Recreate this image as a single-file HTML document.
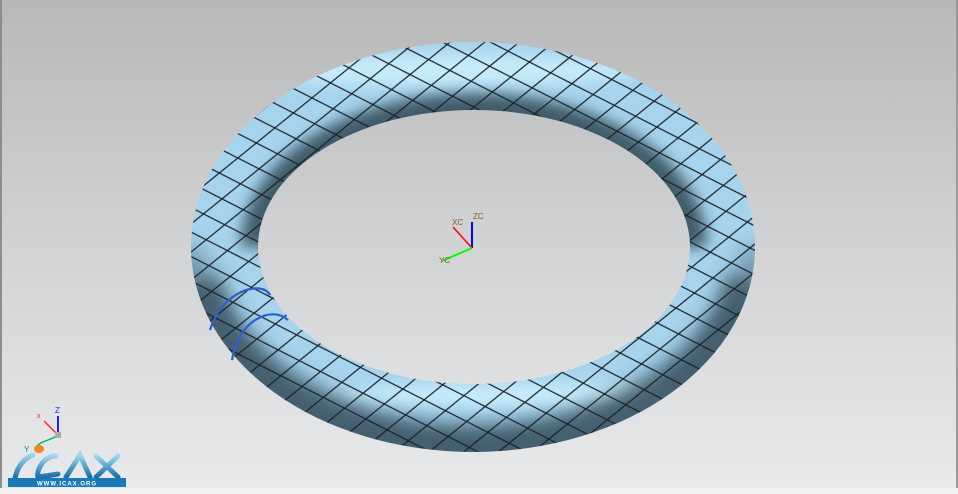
<!DOCTYPE html>
<html><head><meta charset="utf-8"><style>
html,body{margin:0;padding:0;width:958px;height:494px;overflow:hidden}
</style></head><body>
<svg width="958" height="494" viewBox="0 0 958 494" xmlns="http://www.w3.org/2000/svg" font-family="Liberation Sans, sans-serif">
<defs>
<linearGradient id="bg" x1="0" y1="0" x2="0" y2="1">
<stop offset="0" stop-color="#b8b8b9"/><stop offset="0.5" stop-color="#d2d3d4"/><stop offset="1" stop-color="#e9eaeb"/>
</linearGradient>
<pattern id="dia" width="40" height="26" patternUnits="userSpaceOnUse" patternTransform="rotate(-6)">
<path d="M-20 26L20 0 60 26M-20 0L20 26 60 0M-20 52L20 26M20 -26L60 0" stroke="#1a2128" stroke-width="1.2" fill="none"/>
</pattern>
<filter id="bl" x="-20%" y="-50%" width="140%" height="200%"><feGaussianBlur stdDeviation="10"/></filter>
<filter id="bl2" x="-20%" y="-50%" width="140%" height="200%"><feGaussianBlur stdDeviation="7"/></filter>
<mask id="ring">
<ellipse cx="473" cy="247" rx="282" ry="205" fill="#fff"/>
<ellipse cx="474" cy="247" rx="216" ry="137" fill="#000"/>
</mask>
<linearGradient id="logo" x1="0" y1="0" x2="0" y2="1">
<stop offset="0" stop-color="#9fd8f0"/><stop offset="1" stop-color="#1a6fa8"/>
</linearGradient>
</defs>
<rect width="958" height="494" fill="url(#bg)"/>
<rect x="0" y="0" width="2" height="494" fill="#8d8d8d"/>
<rect x="956" y="0" width="2" height="494" fill="#9a9a9a"/>
<rect x="0" y="488" width="958" height="6" fill="#f2f2f2"/>
<g mask="url(#ring)">
<rect x="180" y="30" width="590" height="430" fill="#a6d4ec"/>
<ellipse cx="440" cy="70" rx="200" ry="16" fill="#c6ebfb" filter="url(#bl2)"/>
<ellipse cx="520" cy="395" rx="190" ry="12" fill="#c6ebfb" filter="url(#bl2)"/>
<!-- dark along bottom outer edge -->
<path d="M195 280 A282 205 0 0 0 751 280" fill="none" stroke="#2e4552" stroke-width="50" opacity="0.85" filter="url(#bl)"/>
<path d="M191 247 A282 205 0 0 0 755 247" fill="none" stroke="#4a6676" stroke-width="30" opacity="0.5" filter="url(#bl)"/>
<!-- dark near inner edge of back tube -->
<path d="M258 247 A216 137 0 0 1 690 247" fill="none" stroke="#2f4653" stroke-width="34" opacity="0.85" filter="url(#bl2)"/>
<rect x="180" y="30" width="590" height="430" fill="url(#dia)"/>
</g>
<path d="M210 330C222 290 262 280 270 295" stroke="#2d5fd0" stroke-width="2.2" fill="none"/>
<path d="M232 360C238 320 272 305 288 320" stroke="#2d5fd0" stroke-width="2.2" fill="none"/>
<line x1="472" y1="222" x2="472" y2="248" stroke="#0000ff" stroke-width="2"/>
<line x1="472" y1="248" x2="453" y2="227" stroke="#ff0000" stroke-width="1.5"/>
<line x1="472" y1="248" x2="442" y2="261" stroke="#00ff00" stroke-width="2"/>
<text x="473" y="219" font-size="8" fill="#8a5a2a">ZC</text>
<text x="452" y="225" font-size="8" fill="#8a5a2a">XC</text>
<text x="439" y="263" font-size="8" fill="#8a5a2a">YC</text>
<line x1="58" y1="416" x2="58" y2="435" stroke="#2222ff" stroke-width="2"/>
<line x1="58" y1="435" x2="44" y2="421" stroke="#ff2222" stroke-width="1.3"/>
<path d="M58 435C50 441 42 440 36 447" stroke="#00c070" stroke-width="1.5" fill="none"/>
<rect x="55" y="432" width="6" height="6" fill="#aaa"/>
<text x="55" y="413" font-size="8" fill="#2222ff">Z</text>
<text x="37" y="418" font-size="7" fill="#ff2222">x</text>
<text x="24" y="452" font-size="8" fill="#00a060">Y</text>
<ellipse cx="39" cy="449" rx="5" ry="4" fill="#f08a20"/>
<g fill="none" stroke="url(#logo)" stroke-width="5" stroke-linecap="round">
<path d="M15 478C18 465 25 458 33 455"/>
<path d="M56 456C44 456 36 470 38 477C45 476 52 475 58 474"/>
<path d="M66 477L80 455L90 477"/>
<path d="M96 456L118 477M118 456L96 477"/>
</g>
<rect x="8" y="478" width="118" height="9" fill="#1a7ab8"/>
<text x="67" y="485.5" font-size="6" font-weight="bold" fill="#fff" text-anchor="middle" letter-spacing="1">WWW.ICAX.ORG</text>
</svg>
</body></html>
